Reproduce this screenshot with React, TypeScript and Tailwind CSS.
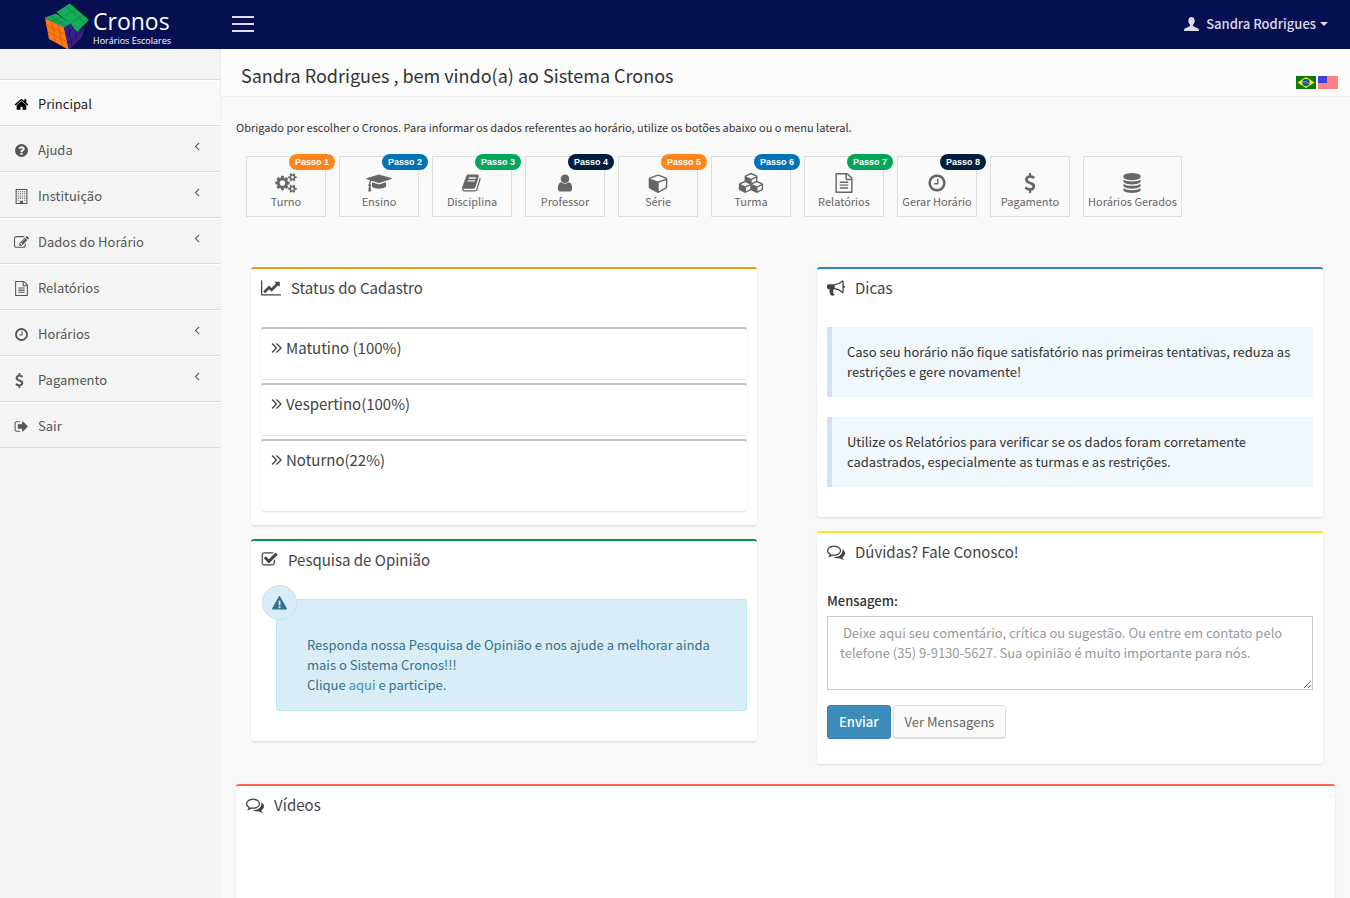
import React, { useState } from 'react';

interface IconProps {
  d: string;
  box?: string;
  className?: string;
}

interface MenuItem {
  label: string;
  icon: string;
  box?: string;
  active?: boolean;
  hasChildren?: boolean;
}

interface Step {
  label: string;
  icon: string;
  box?: string;
  size: string;
  badge?: string;
  badgeColor?: string;
}

const ICONS = {
  home: 'M1472 992v480q0 26-19 45t-45 19h-384v-384h-256v384h-384q-26 0-45-19t-19-45v-480q0-1 .5-3t.5-3l575-474 575 474q1 2 1 6zm223-69l-62 74q-8 9-21 11h-3q-13 0-21-7l-692-577-692 577q-12 8-24 7-13-2-21-11l-62-74q-8-10-7-23.5t11-21.5l719-599q32-26 76-26t76 26l244 204v-195q0-14 9-23t23-9h192q14 0 23 9t9 23v408l219 182q10 8 11 21.5t-7 23.5z',
  help: 'M1024 1376v-192q0-14-9-23t-23-9h-192q-14 0-23 9t-9 23v192q0 14 9 23t23 9h192q14 0 23-9t9-23zm256-672q0-88-55.5-163t-138.5-116-170-41q-243 0-371 213-15 24 8 42l132 100q7 6 19 6 16 0 25-12 53-68 86-92 34-24 86-24 48 0 85.5 26t37.5 59q0 38-20 61t-68 45q-63 28-115.5 86.5t-52.5 125.5v36q0 14 9 23t23 9h192q14 0 23-9t9-23q0-19 21.5-49.5t54.5-49.5q32-18 49-28.5t46-35 44.5-48 28-60.5 12.5-81zm384 192q0 209-103 385.5t-279.5 279.5-385.5 103-385.5-103-279.5-279.5-103-385.5 103-385.5 279.5-279.5 385.5-103 385.5 103 279.5 279.5 103 385.5z',
  building: 'M192 0h1408v1792h-1408zM320 128v1536h384v-256h384v256h384v-1536zM448 256h128v128h-128zM704 256h128v128h-128zM960 256h128v128h-128zM1216 256h128v128h-128zM448 512h128v128h-128zM704 512h128v128h-128zM960 512h128v128h-128zM1216 512h128v128h-128zM448 768h128v128h-128zM704 768h128v128h-128zM960 768h128v128h-128zM1216 768h128v128h-128zM448 1024h128v128h-128zM704 1024h128v128h-128zM960 1024h128v128h-128zM1216 1024h128v128h-128zM448 1280h128v128h-128zM1216 1280h128v128h-128z',
  edit: 'M888 1184l116-116-152-152-116 116v56h96v96h56zm440-720q-16-16-33 1l-350 350q-17 17-1 33t33-1l350-350q17-17 1-33zm80 594v190q0 119-84.5 203.5t-203.5 84.5h-832q-119 0-203.5-84.5t-84.5-203.5v-832q0-119 84.5-203.5t203.5-84.5h832q63 0 117 25 15 7 18 23 3 17-9 29l-49 49q-14 14-32 8-23-6-45-6h-832q-66 0-113 47t-47 113v832q0 66 47 113t113 47h832q66 0 113-47t47-113v-126q0-13 9-22l64-64q15-15 35-7t20 29zm-96-738l288 288-672 672h-288v-288zm444 132l-92 92-288-288 92-92q28-28 68-28t68 28l152 152q28 28 28 68t-28 68z',
  file: 'M1596 380q28 28 48 76t20 88v1152q0 40-28 68t-68 28h-1344q-40 0-68-28t-28-68v-1600q0-40 28-68t68-28h896q40 0 88 20t76 48zm-444-244v376h376q-10-29-22-41l-313-313q-12-12-41-22zm384 1528v-1024h-416q-40 0-68-28t-28-68v-416h-768v1536h1280zm-1024-864q0-14 9-23t23-9h704q14 0 23 9t9 23v64q0 14-9 23t-23 9h-704q-14 0-23-9t-9-23v-64zm736 224q14 0 23 9t9 23v64q0 14-9 23t-23 9h-704q-14 0-23-9t-9-23v-64q0-14 9-23t23-9h704zm0 256q14 0 23 9t9 23v64q0 14-9 23t-23 9h-704q-14 0-23-9t-9-23v-64q0-14 9-23t23-9h704z',
  clock: 'M1024 544v448q0 14-9 23t-23 9h-320q-14 0-23-9t-9-23v-64q0-14 9-23t23-9h224v-352q0-14 9-23t23-9h64q14 0 23 9t9 23zm416 352q0-148-73-273t-198-198-273-73-273 73-198 198-73 273 73 273 198 198 273 73 273-73 198-198 73-273zm224 0q0 209-103 385.5t-279.5 279.5-385.5 103-385.5-103-279.5-279.5-103-385.5 103-385.5 279.5-279.5 385.5-103 385.5 103 279.5 279.5 103 385.5z',
  dollar: 'M1362 1185q0 153-99.5 263.5t-258.5 136.5v175q0 14-9 23t-23 9h-135q-13 0-22.5-9.5t-9.5-22.5v-175q-66-9-127.5-31t-101.5-44.5-74-48-46.5-37.5-17.5-18q-17-21-2-41l103-135q7-10 23-12 15-2 24 9l2 2q113 99 243 125 37 8 74 8 81 0 142.5-43t61.5-122q0-28-15-53t-33.5-42-58.5-37.5-66-32-80-32.5q-39-16-61.5-25t-61.5-26.5-62.5-31-56.5-35.5-53.5-42.5-43.5-49-35.5-58-21-66.5-8.5-78q0-138 98-242t255-134v-180q0-13 9.5-22.5t22.5-9.5h135q14 0 23 9t9 23v176q57 6 110.5 23t87 33.5 63.5 37.5 39 29 15 14q17 18 5 38l-81 146q-8 15-23 16-14 3-27-7-3-3-14.5-12t-39-26.5-58.5-32-74.5-26-85.5-11.5q-95 0-155 43t-60 111q0 26 8.5 48t29.5 41.5 39.5 33 56 31 60.5 27 70 27.5q53 20 81 31.5t76 35 75.5 42.5 62 50 53 63.5 31.5 76.5 13 94z',
  signOut: 'M704 1440q0 4 1 20t.5 26.5-3 23.5-10 19.5-20.5 6.5h-320q-119 0-203.5-84.5t-84.5-203.5v-704q0-119 84.5-203.5t203.5-84.5h320q13 0 22.5 9.5t9.5 22.5q0 4 1 20t.5 26.5-3 23.5-10 19.5-20.5 6.5h-320q-66 0-113 47t-47 113v704q0 66 47 113t113 47h312l11.5 1 11.5 3 8 5.5 7 9 2 13.5zm928-544q0 26-19 45l-544 544q-19 19-45 19t-45-19-19-45v-288h-448q-26 0-45-19t-19-45v-384q0-26 19-45t45-19h448v-288q0-26 19-45t45-19 45 19l544 544q19 19 19 45z',
  angleLeft: 'M1203 544q0 13-10 23l-393 393 393 393q10 10 10 23t-10 23l-50 50q-10 10-23 10t-23-10l-466-466q-10-10-10-23t10-23l466-466q10-10 23-10t23 10l50 50q10 10 10 23z',
  cogs: 'M896 896q0-106-75-181t-181-75-181 75-75 181 75 181 181 75 181-75 75-181zm768 512q0-52-38-90t-90-38-90 38-38 90q0 53 37.5 90.5t90.5 37.5 90.5-37.5 37.5-90.5zm0-1024q0-52-38-90t-90-38-90 38-38 90q0 53 37.5 90.5t90.5 37.5 90.5-37.5 37.5-90.5zm-384 421v185q0 10-7 19.5t-16 10.5l-155 24q-11 35-32 76 34 48 90 115 7 11 7 20 0 12-7 19-23 30-82.5 89.5t-78.5 59.5q-11 0-21-7l-115-90q-37 19-77 31-11 108-23 155-7 24-30 24h-186q-11 0-20-7.5t-10-17.5l-23-153q-34-10-75-31l-118 89q-7 7-20 7-11 0-21-8-144-133-144-160 0-9 7-19 10-14 41-53t47-61q-23-44-35-82l-152-24q-10-1-17-9.5t-7-19.5v-185q0-10 7-19.5t16-10.5l155-24q11-35 32-76-34-48-90-115-7-11-7-20 0-12 7-20 22-30 82-89t79-59q11 0 21 7l115 90q34-18 77-32 11-108 23-154 7-24 30-24h186q11 0 20 7.5t10 17.5l23 153q34 10 75 31l118-89q8-7 20-7 11 0 21 8 144 133 144 160 0 8-7 19-12 16-42 54t-45 60q23 48 34 82l152 23q10 2 17 10.5t7 19.5zm640 533v140q0 16-149 31-12 27-30 52 51 113 51 138 0 4-4 7-122 71-124 71-8 0-46-47t-52-68q-20 2-30 2t-30-2q-14 21-52 68t-46 47q-2 0-124-71-4-3-4-7 0-25 51-138-18-25-30-52-149-15-149-31v-140q0-16 149-31 13-29 30-52-51-113-51-138 0-4 4-7 4-2 35-20t59-34 30-16q8 0 46 46.5t52 67.5q20-2 30-2t30 2q51-71 92-112l6-2q4 0 124 70 4 3 4 7 0 25-51 138 17 23 30 52 149 15 149 31zm0-1024v140q0 16-149 31-12 27-30 52 51 113 51 138 0 4-4 7-122 71-124 71-8 0-46-47t-52-68q-20 2-30 2t-30-2q-14 21-52 68t-46 47q-2 0-124-71-4-3-4-7 0-25 51-138-18-25-30-52-149-15-149-31v-140q0-16 149-31 13-29 30-52-51-113-51-138 0-4 4-7 4-2 35-20t59-34 30-16q8 0 46 46.5t52 67.5q20-2 30-2t30 2q51-71 92-112l6-2q4 0 124 70 4 3 4 7 0 25-51 138 17 23 30 52 149 15 149 31z',
  gradCap: 'M1774 836l18 316q4 69-82 128t-235 93.5-323 34.5-323-34.5-235-93.5-82-128l18-316 574 181q22 7 48 7t48-7zm530-324q0 23-22 31l-1120 352q-4 1-10 1t-10-1l-652-206q-43 34-71 111.5t-34 178.5q63 36 63 109 0 69-58 107l58 433q2 14-8 25-9 11-24 11h-192q-15 0-24-11-10-11-8-25l58-433q-58-38-58-107 0-73 65-111 11-207 98-330l-333-104q-22-8-22-31t22-31l1120-352q4-1 10-1t10 1l1120 352q22 8 22 31z',
  book: 'M1639 478q40 57 18 129l-275 906q-19 64-76.5 107.5t-122.5 43.5h-923q-77 0-148.5-53.5t-99.5-131.5q-24-67-2-127 0-4 3-27t4-37q1-8-3-21.5t-3-19.5q2-11 8-21t16.5-23.5 16.5-23.5q23-38 45-91.5t30-91.5q3-10 .5-30t-.5-28q3-11 17-28t17-23q21-36 42-92t25-90q1-9-2.5-32t.5-28q4-13 22-30.5t22-22.5q19-26 42.5-84.5t27.5-96.5q1-8-3-25.5t-2-26.5q2-8 9-18t18-23 17-21q8-12 16.5-30.5t15-35 16-36 19.5-32 26.5-23.5 36-11.5 47.5 5.5l-1 3q38-9 51-9h761q74 0 114 56t18 130l-274 906q-36 119-71.5 153.5t-128.5 34.5h-869q-27 0-38 15-11 16-1 43 24 70 144 70h923q29 0 56-15.5t35-41.5l300-987q7-22 5-57 38 15 59 43zm-1064 2q-4 13 2 22.5t20 9.5h608q13 0 25.5-9.5t16.5-22.5l21-64q4-13-2-22.5t-20-9.5h-608q-13 0-25.5 9.5t-16.5 22.5zm-83 256q-4 13 2 22.5t20 9.5h608q13 0 25.5-9.5t16.5-22.5l21-64q4-13-2-22.5t-20-9.5h-608q-13 0-25.5 9.5t-16.5 22.5z',
  user: 'M1536 1399q0 109-62.5 187t-150.5 78h-854q-88 0-150.5-78t-62.5-187q0-85 8.5-160.5t31.5-152 58.5-131 94-89 134.5-34.5q131 128 313 128t313-128q76 0 134.5 34.5t94 89 58.5 131 31.5 152 8.5 160.5zm-256-887q0 159-112.5 271.5t-271.5 112.5-271.5-112.5-112.5-271.5 112.5-271.5 271.5-112.5 271.5 112.5 112.5 271.5z',
  cube: 'M896 1629l640-349v-636l-640 233v752zm-64-865l698-254-698-254-698 254zm832-252v768q0 35-18 65t-49 47l-704 384q-28 16-61 16t-61-16l-704-384q-31-17-49-47t-18-65v-768q0-40 23-73t61-47l704-256q22-8 44-8t44 8l704 256q38 14 61 47t23 73z',
  cubes: 'M640 1632l384-192v-314l-384 164v342zm-64-454l404-173-404-173-404 173zm1088 454l384-192v-314l-384 164v342zm-64-454l404-173-404-173-404 173zm-448-293l384-165v-266l-384 164v267zm-64-379l441-189-441-189-441 189zm1088 518v416q0 36-19 67t-52 47l-448 224q-25 14-57 14t-57-14l-448-224q-4-2-7-4-2 2-7 4l-448 224q-25 14-57 14t-57-14l-448-224q-33-16-52-47t-19-67v-416q0-38 21.5-70t56.5-48l434-186v-400q0-38 21.5-70t56.5-48l448-192q23-10 50-10t50 10l448 192q35 16 56.5 48t21.5 70v400l434 186q36 16 57 48t21 70z',
  database: 'M896 768q237 0 443-43t325-127v170q0 69-103 128t-280 93.5-385 34.5-385-34.5-280-93.5-103-128v-170q119 84 325 127t443 43zm0 768q237 0 443-43t325-127v170q0 69-103 128t-280 93.5-385 34.5-385-34.5-280-93.5-103-128v-170q119 84 325 127t443 43zm0-384q237 0 443-43t325-127v170q0 69-103 128t-280 93.5-385 34.5-385-34.5-280-93.5-103-128v-170q119 84 325 127t443 43zm0-1152q208 0 385 34.5t280 93.5 103 128v128q0 69-103 128t-280 93.5-385 34.5-385-34.5-280-93.5-103-128v-128q0-69 103-128t280-93.5 385-34.5z',
  lineChart: 'M2048 1536v128h-2048v-1536h128v1408h1920zm-128-1248v435q0 21-19.5 29.5t-35.5-7.5l-121-121-633 633q-10 10-23 10t-23-10l-233-233-416 416-192-192 585-585q10-10 23-10t23 10l233 233 464-464-121-121q-16-16-7.5-35.5t29.5-19.5h435q14 0 23 9t9 23z',
  bullhorn: 'M1664 640q53 0 90.5 37.5t37.5 90.5-37.5 90.5-90.5 37.5v384q0 52-38 90t-90 38q-417-347-812-380-58 19-91 66t-31 100.5 40 92.5q-20 33-23 65.5t6 58 33.5 55 48 50 61.5 50.5q-29 58-111.5 83t-168.5 11.5-132-55.5q-7-23-29.5-87.5t-32-94.5-23-89-15-101 3.5-98.5 22-110.5h-122q-66 0-113-47t-47-113v-192q0-66 47-113t113-47h480q435 0 896-384 52 0 90 38t38 90v384zm-128 604v-954q-394 302-768 343v270q377 42 768 341z',
  checkSquare: 'M1472 930v318q0 119-84.5 203.5t-203.5 84.5h-832q-119 0-203.5-84.5t-84.5-203.5v-832q0-119 84.5-203.5t203.5-84.5h832q63 0 117 25 15 7 18 23 3 17-9 29l-49 49q-10 10-23 10-3 0-9-2-23-6-45-6h-832q-66 0-113 47t-47 113v832q0 66 47 113t113 47h832q66 0 113-47t47-113v-254q0-13 9-22l64-64q10-10 23-10 6 0 12 3 20 8 20 29zm231-489l-814 814q-24 24-57 24t-57-24l-430-430q-24-24-24-57t24-57l110-110q24-24 57-24t57 24l263 263 647-647q24-24 57-24t57 24l110 110q24 24 24 57t-24 57z',
  comments: 'M704 384q-153 0-286 52t-211.5 141-78.5 191q0 82 53 158t149 132l97 56-35 84q34-20 62-39l44-31 53 10q78 14 153 14 153 0 286-52t211.5-141 78.5-191-78.5-191-211.5-141-286-52zm0-128q191 0 353.5 68.5t256.5 186.5 94 257-94 257-256.5 186.5-353.5 68.5q-86 0-176-16-124 88-278 128-36 9-86 16h-3q-11 0-20.5-8t-11.5-21q-1-3-1-6.5t.5-6.5 2-6l2.5-5 3.5-5.5 4-5 4.5-5 4-4.5q5-6 23-25t26-29.5 22.5-29 25-38.5 20.5-44q-124-72-195-177t-71-224q0-139 94-257t256.5-186.5 353.5-68.5zm822 1169q10 24 20.5 44t25 38.5 22.5 29 26 29.5 23 25q1 1 4 4.5t4.5 5 4 5 3.5 5.5l2.5 5 2 6 .5 6.5-1 6.5q-3 14-13 22t-22 7q-50-7-86-16-154-40-278-128-90 16-176 16-271 0-472-132 58 4 88 4 161 0 309-45t264-129q125-92 192-212t67-254q0-77-23-152 129 71 204 178t75 230q0 120-71 224.5t-195 176.5z',
  person: 'M8 0C5.800 0 4.600 1.700 4.600 3.900c0 1.700.7 3.300 1.700 4.200.3.900.1 1.700-.7 2.100L1.500 12C.5 12.500 0 13 0 14v1h16v-1c0-1-.5-1.500-1.500-2l-4.100-1.800c-.8-.4-1-1.200-.7-2.100 1-.9 1.700-2.500 1.700-4.200C11.400 1.700 10.200 0 8 0z',
  warning: 'M7.300.6L.2 13.200c-.4.700 0 1.300.7 1.300h14.200c.7 0 1.100-.6.700-1.300L8.700.6c-.4-.7-1-.7-1.400 0zM7 5h2v4.800H7zM7 11h2v2H7z',
};

const MENU: MenuItem[] = [
  { label: 'Principal', icon: ICONS.home, active: true },
  { label: 'Ajuda', icon: ICONS.help, hasChildren: true },
  { label: 'Instituição', icon: ICONS.building, hasChildren: true },
  { label: 'Dados do Horário', icon: ICONS.edit, hasChildren: true },
  { label: 'Relatórios', icon: ICONS.file },
  { label: 'Horários', icon: ICONS.clock, hasChildren: true },
  { label: 'Pagamento', icon: ICONS.dollar, box: '256 0 1792 1792', hasChildren: true },
  { label: 'Sair', icon: ICONS.signOut },
];

const STEPS: Step[] = [
  { label: 'Turno', icon: ICONS.cogs, box: '0 0 1920 1792', size: 'h-5 w-[22px]', badge: 'Passo 1', badgeColor: 'bg-[#ff851b]' },
  { label: 'Ensino', icon: ICONS.gradCap, box: '0 0 2304 1792', size: 'h-5 w-[26px]', badge: 'Passo 2', badgeColor: 'bg-[#0073b7]' },
  { label: 'Disciplina', icon: ICONS.book, size: 'h-5 w-5', badge: 'Passo 3', badgeColor: 'bg-[#00a65a]' },
  { label: 'Professor', icon: ICONS.user, size: 'h-5 w-5', badge: 'Passo 4', badgeColor: 'bg-[#001f3f]' },
  { label: 'Série', icon: ICONS.cube, box: '0 0 1664 1792', size: 'h-5 w-5', badge: 'Passo 5', badgeColor: 'bg-[#ff851b]' },
  { label: 'Turma', icon: ICONS.cubes, box: '0 0 2176 1792', size: 'h-5 w-[26px]', badge: 'Passo 6', badgeColor: 'bg-[#0073b7]' },
  { label: 'Relatórios', icon: ICONS.file, size: 'h-5 w-5', badge: 'Passo 7', badgeColor: 'bg-[#00a65a]' },
  { label: 'Gerar Horário', icon: ICONS.clock, size: 'h-5 w-5', badge: 'Passo 8', badgeColor: 'bg-[#001f3f]' },
  { label: 'Pagamento', icon: ICONS.dollar, size: 'h-5 w-5' },
  { label: 'Horários Gerados', icon: ICONS.database, size: 'h-5 w-5' },
];

const SHIFTS = ['Matutino (100%)', 'Vespertino(100%)', 'Noturno(22%)'];

const TIPS = [
  'Caso seu horário não fique satisfatório nas primeiras tentativas, reduza as restrições e gere novamente!',
  'Utilize os Relatórios para verificar se os dados foram corretamente cadastrados, especialmente as turmas e as restrições.',
];

const Icon: React.FC<IconProps> = ({ d, box = '0 0 1792 1792', className }) => (
  <svg viewBox={box} className={className} fill="currentColor" fillRule="evenodd" aria-hidden="true">
    <path d={d} />
  </svg>
);

const CubeLogo = () => (
  <svg viewBox="0 0 46 48" className="h-12 w-[46px] shrink-0" aria-hidden="true">
    <path d="M12 8L30 1 45 16 38 33 26 47 12 30z" fill="#1a1030" />
    <path d="M12.500 9L26 .5 45 17 33 29 26 21z" fill="#12ad5b" />
    <path d="M13 10L27 21l5 9-6-4-9-8z" fill="#1a1030" />
    <path d="M1 14.500L12 10.500l15 10-7 4.500z" fill="#12ad5b" />
    <path d="M1 15l19 9.500 5 22.500L5 36z" fill="#fb7a13" />
    <path d="M20 24.500L27 20.500l5 9.500 9-7-3 11-13 13z" fill="#36208a" />
    <path d="M22 3.500l19 16.500M21 13L33 6M28 19l11-7" stroke="#0b8444" strokeWidth=".8" fill="none" />
    <path d="M6 12.500l16 11M8 18l9-4M14 21l8-4" stroke="#0b8444" strokeWidth=".7" fill="none" />
    <path d="M2.500 22l19 9.500M4 29l19 10M7.500 18l4 21M14 21.500l4.500 21.500" stroke="#d95e08" strokeWidth=".9" fill="none" />
    <path d="M22 32l8-7M24 40l15-13M24 23l4 20M31 30l2 8" stroke="#20125c" strokeWidth=".8" fill="none" />
  </svg>
);

const BrazilFlag = () => (
  <svg viewBox="0 0 20 13" className="h-[13px] w-5" aria-hidden="true">
    <path d="M0 0h20v13H0z" fill="#0b7a0b" />
    <path d="M10 1l8.500 5.500L10 12 1.500 6.500z" fill="#f4ef1c" />
    <circle cx="10" cy="6.500" r="3.700" fill="#1c5c96" />
    <path d="M6.700 5.500q3.500-.5 6.500 2.300" stroke="#7fb0d0" strokeWidth=".8" fill="none" />
  </svg>
);

const UsaFlag = () => (
  <svg viewBox="0 0 20 13" className="h-[13px] w-5" aria-hidden="true">
    <path d="M0 0h20v13H0z" fill="#ff8080" />
    <path d="M0 0h9v7H0z" fill="#4040d8" />
  </svg>
);

interface BoxProps {
  title: string;
  icon: string;
  iconBox?: string;
  iconSize: string;
  color: string;
  className?: string;
  children?: React.ReactNode;
}

const Box: React.FC<BoxProps> = ({ title, icon, iconBox, iconSize, color, className = '', children }) => (
  <section className={`rounded-[3px] border-t-2 bg-white px-[10px] shadow-[0_1px_2px_rgba(0,0,0,0.12)] ${color} ${className}`}>
    <h3 className="flex h-10 items-center gap-[10px] pb-[3px] text-[15px] text-[#444]">
      <Icon d={icon} box={iconBox} className={iconSize} />
      {title}
    </h3>
    {children}
  </section>
);

const App: React.FC = () => {
  const [message, setMessage] = useState('');

  const handleSubmit = (e: React.FormEvent) => {
    e.preventDefault();
    setMessage('');
  };

  return (
    <div className="flex min-h-screen flex-col bg-[#f9f9f9] font-['Noto_Sans_CJK_SC',sans-serif] text-[13px] leading-5 text-[#333]">
      <header className="flex h-[49px] items-center bg-[#060f51] pb-[2px] text-[#dcdce8]">
        <a href="#" className="flex w-[220px] items-center gap-[3px] pt-[6px] pl-11 font-['Open_Sans',sans-serif] text-white">
          <CubeLogo />
          <span className="flex flex-col">
            <span className="text-[23px] leading-7">Cronos</span>
            <span className="text-[9px] leading-3 font-medium whitespace-nowrap">Horários Escolares</span>
          </span>
        </a>
        <button type="button" aria-label="Menu" className="ml-3 flex w-[22px] flex-col gap-[5px]">
          <span className="h-[2px] w-full bg-[#dcdce8]" />
          <span className="h-[2px] w-full bg-[#dcdce8]" />
          <span className="h-[2px] w-full bg-[#dcdce8]" />
        </button>
        <button type="button" className="mr-[22px] ml-auto flex items-center font-medium">
          <Icon d={ICONS.person} box="0 0 16 15" className="mr-[7px] h-[14px] w-[15px]" />
          Sandra Rodrigues
          <span className="ml-1 border-x-4 border-t-4 border-x-transparent border-t-current" />
        </button>
      </header>

      <div className="flex flex-1">
        <nav className="w-[221px] shrink-0 border-r border-[#eee] bg-[#f4f4f4] pt-[30px]">
          <ul className="border-t border-[#dadada]">
            {MENU.map((item) => (
              <li key={item.label} className="border-b border-[#dadada]">
                <a
                  href="#"
                  className={`flex h-[45px] items-center border-t border-white pt-[2px] pr-4 pl-[14px] ${item.active ? 'bg-[#f9f9f9] text-[#222]' : 'text-[#555]'}`}
                >
                  <Icon d={item.icon} box={item.box} className={`h-[15px] w-[15px] shrink-0 ${item.active ? 'text-black' : ''}`} />
                  <span className="ml-[9px]">{item.label}</span>
                  {item.hasChildren && <Icon d={ICONS.angleLeft} className="mb-2 ml-auto h-[14px] w-[14px]" />}
                </a>
              </li>
            ))}
          </ul>
        </nav>

        <main className="flex min-w-0 flex-1 flex-col">
          <div className="flex h-12 items-center justify-between border-b border-[#eee] bg-[#fcfcfc] pr-3 pl-5">
            <h1 className="pt-1 text-lg leading-6 text-[#333]">Sandra Rodrigues , bem vindo(a) ao Sistema Cronos</h1>
            <div className="flex gap-[2px] pt-5">
              <a href="#" aria-label="Português"><BrazilFlag /></a>
              <a href="#" aria-label="English"><UsaFlag /></a>
            </div>
          </div>

          <div className="flex flex-1 flex-col px-[15px] pt-5">
            <p className="text-[11px]">
              Obrigado por escolher o Cronos. Para informar os dados referentes ao horário, utilize os botões abaixo ou o menu lateral.
            </p>

            <div className="mt-[19px] flex flex-wrap gap-[13px] pl-[10px]">
              {STEPS.map((step) => (
                <a
                  key={step.label}
                  href="#"
                  className="relative flex h-[61px] min-w-20 flex-col items-center border border-[#ddd] bg-[#fafafa] px-1 pt-4 text-[11px] leading-4 whitespace-nowrap text-[#666]"
                >
                  {step.badge && (
                    <span className={`absolute -top-[3px] -right-[10px] rounded-full px-[6px] font-['Liberation_Sans',sans-serif] text-[9px] leading-4 font-bold text-white ${step.badgeColor}`}>
                      {step.badge}
                    </span>
                  )}
                  <Icon d={step.icon} box={step.box} className={step.size} />
                  {step.label}
                </a>
              ))}
            </div>

            <div className="mt-[50px] grid grid-cols-2 items-start gap-[60px] pr-3 pl-[15px]">
              <div className="flex flex-col gap-[14px]">
                <Box title="Status do Cadastro" icon={ICONS.lineChart} iconBox="0 0 2048 1792" iconSize="h-[18px] w-5" color="border-[#f39c12]" className="pb-[14px]">
                  <ul className="mt-[18px] flex flex-col gap-1">
                    {SHIFTS.map((shift) => (
                      <li key={shift} className="h-[52px] rounded-[3px] border-t-2 border-[#c1c1c1] px-[10px] pt-[7px] shadow-[0_1px_2px_rgba(0,0,0,0.12)] last:h-[72px]">
                        <a href="#" className="flex items-center gap-1 text-[15px] leading-6 text-[#444]">
                          <svg viewBox="0 0 11 12" className="h-3 w-[11px]" fill="none" stroke="currentColor" strokeWidth="1.3" aria-hidden="true">
                            <path d="M1 1.500L5.500 6 1 10.500M5.500 1.500L10 6l-4.500 4.500" />
                          </svg>
                          {shift}
                        </a>
                      </li>
                    ))}
                  </ul>
                </Box>

                <Box title="Pesquisa de Opinião" icon={ICONS.checkSquare} iconSize="h-[17px] w-[17px]" color="border-[#00964f]" className="pb-[30px]">
                  <div className="relative mt-[18px] ml-[15px] rounded-[3px] border border-[#bce8f1] bg-[#d9edf7] px-[30px] pt-[35px] pb-[15px] text-[#31708f]">
                    <span className="absolute -top-[15px] -left-[15px] flex h-[35px] w-[35px] items-center justify-center rounded-full border border-[#bce8f1] bg-[#d9edf7]">
                      <Icon d={ICONS.warning} box="0 0 16 15" className="h-[14px] w-[15px]" />
                    </span>
                    <p>
                      Responda nossa Pesquisa de Opinião e nos ajude a melhorar ainda mais o Sistema Cronos!!!
                      <br />
                      Clique <a href="#" className="text-[#3c8dbc]">aqui</a> e participe.
                    </p>
                  </div>
                </Box>
              </div>

              <div className="flex flex-col gap-[14px]">
                <Box title="Dicas" icon={ICONS.bullhorn} iconSize="h-[18px] w-[18px]" color="border-[#2a86c0]" className="pb-[30px]">
                  <div className="mt-[18px] flex flex-col gap-5">
                    {TIPS.map((tip) => (
                      <p key={tip} className="border-l-[5px] border-[#d0e3f0] bg-[#f0f7fd] p-[15px]">
                        {tip}
                      </p>
                    ))}
                  </div>
                </Box>

                <Box title="Dúvidas? Fale Conosco!" icon={ICONS.comments} iconSize="h-[18px] w-[18px]" color="border-[#f0ec1e]" className="pb-[25px]">
                  <form onSubmit={handleSubmit} className="pt-[18px]">
                    <label htmlFor="mensagem" className="block font-medium">Mensagem:</label>
                    <textarea
                      id="mensagem"
                      rows={3}
                      value={message}
                      onChange={(e) => setMessage(e.target.value)}
                      placeholder=" Deixe aqui seu comentário, crítica ou sugestão. Ou entre em contato pelo telefone (35) 9-9130-5627. Sua opinião é muito importante para nós."
                      className="mt-[5px] block w-full border border-[#ccc] bg-white px-3 py-[6px] placeholder:text-[#999]"
                    />
                    <div className="mt-[15px] flex gap-[2px]">
                      <button type="submit" className="h-[34px] rounded-[3px] border border-[#367fa9] bg-[#3c8dbc] px-[11px] font-medium text-white">Enviar</button>
                      <button type="button" className="h-[34px] rounded-[3px] border border-[#ddd] bg-[#fafafa] px-[11px] text-[#666] shadow-[inset_0_-1px_0_#ddd]">Ver Mensagens</button>
                    </div>
                  </form>
                </Box>
              </div>
            </div>

            <Box title="Vídeos" icon={ICONS.comments} iconSize="h-[18px] w-[18px]" color="border-[#f56954]" className="mt-5 flex-1 rounded-b-none" />
          </div>
        </main>
      </div>
    </div>
  );
};

export default App;
